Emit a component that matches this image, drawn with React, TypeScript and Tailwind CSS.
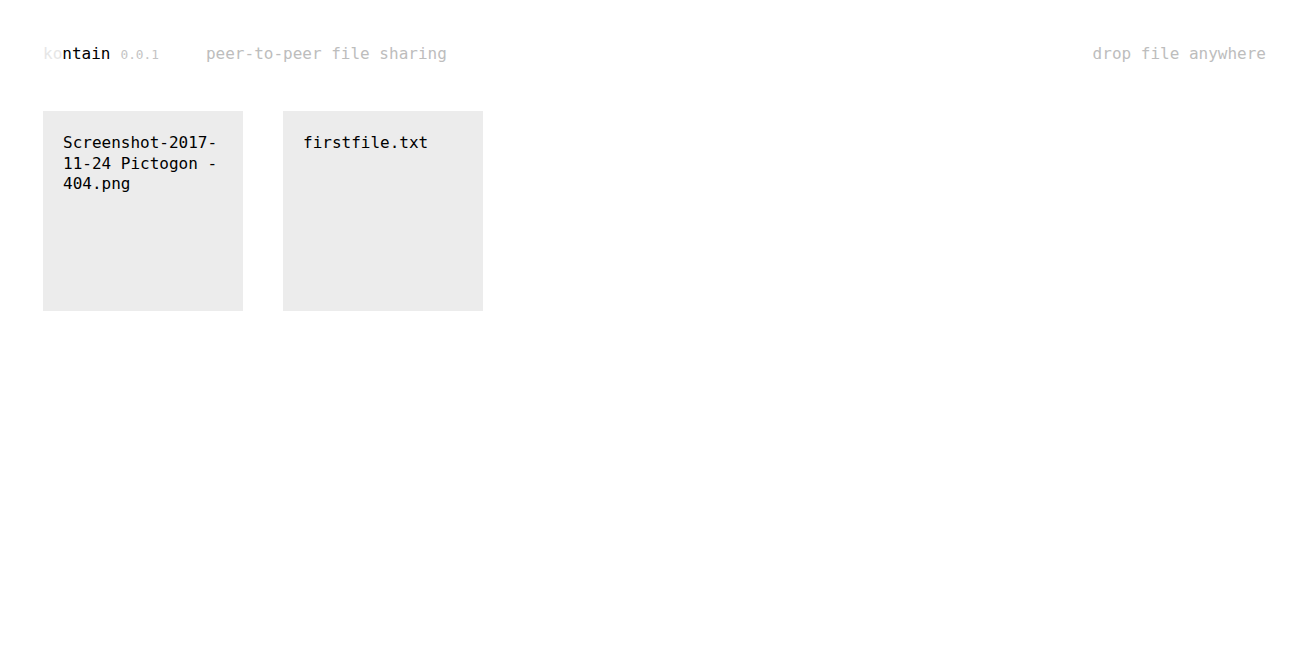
export default function App() {
  const files = ["Screenshot-2017-11-24 Pictogon - 404.png", "firstfile.txt"]

  return (
    <div className="min-h-screen bg-white text-black font-['DejaVu_Sans_Mono','Liberation_Mono',monospace] text-[16px] leading-[1.3]">
      {/* Header */}
      <header className="flex items-center justify-between pl-[43px] pr-[41px] pt-[44px]">
        <div className="flex items-baseline">
          <span>
            <span className="text-[#e6e6e6]">ko</span>ntain
          </span>
          <span className="ml-[10px] text-[12.8px] text-[#c4c4c4]">0.0.1</span>
          <span className="ml-[47px] text-[#bdbdbd]">peer-to-peer file sharing</span>
        </div>
        <div className="text-[#bdbdbd]">drop file anywhere</div>
      </header>

      {/* Files */}
      <main className="flex gap-[40px] pl-[43px] pt-[46px]">
        {files.map((name) => (
          <div key={name} className="w-[200px] h-[200px] bg-[#ececec] px-[20px] pt-[22px] break-words">
            {name}
          </div>
        ))}
      </main>
    </div>
  )
}
